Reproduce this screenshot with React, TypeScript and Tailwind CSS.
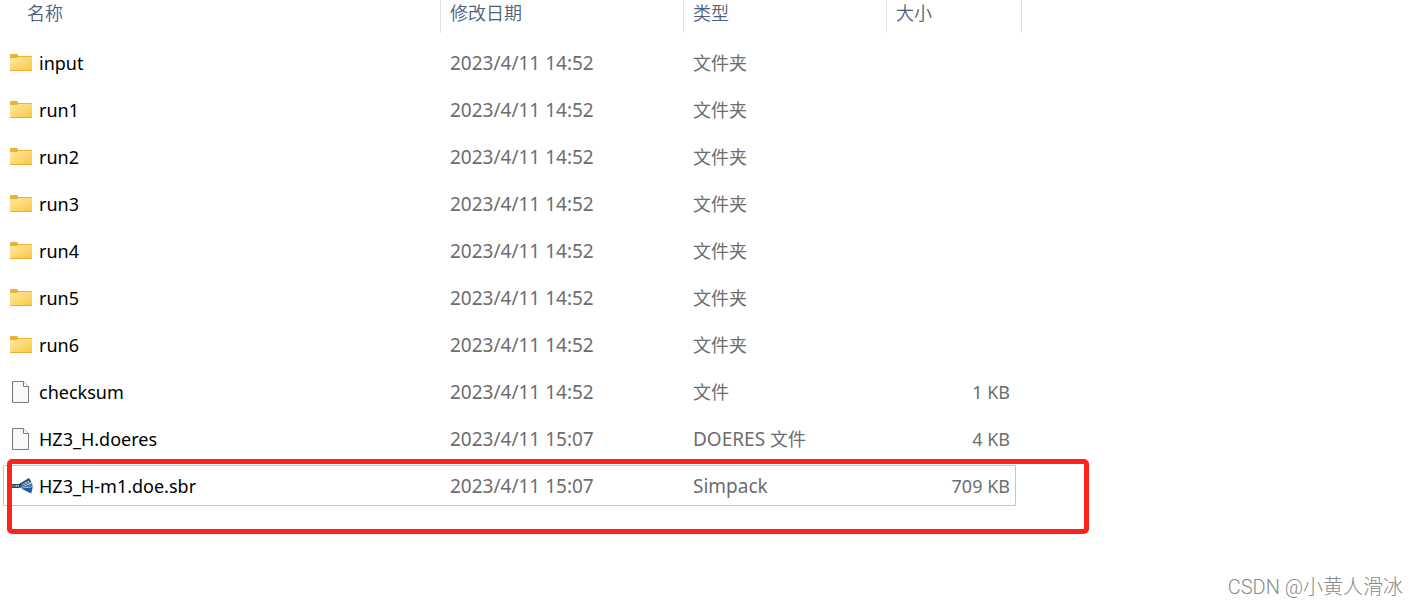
type Kind = "folder" | "file" | "simpack";

interface Entry {
  name: string;
  date: string;
  type: string;
  cjkType?: string;
  size?: string;
  kind: Kind;
}

const folders: Entry[] = ["input", "run1", "run2", "run3", "run4", "run5", "run6"].map((name) => ({
  name,
  date: "2023/4/11 14:52",
  type: "",
  cjkType: "文件夹",
  kind: "folder",
}));

const entries: Entry[] = [
  ...folders,
  { name: "checksum", date: "2023/4/11 14:52", type: "", cjkType: "文件", size: "1 KB", kind: "file" },
  { name: "HZ3_H.doeres", date: "2023/4/11 15:07", type: "DOERES ", cjkType: "文件", size: "4 KB", kind: "file" },
  { name: "HZ3_H-m1.doe.sbr", date: "2023/4/11 15:07", type: "Simpack", size: "709 KB", kind: "simpack" },
];

function FolderIcon() {
  return (
    <svg className="h-[18px] w-6 shrink-0" viewBox="0 0 24 18" aria-hidden="true">
      <defs>
        <linearGradient id="folder" x1="0" y1="0" x2="1" y2="1">
          <stop offset="0" stopColor="#ffe9a6" />
          <stop offset="1" stopColor="#fbc843" />
        </linearGradient>
      </defs>
      <path d="M1 1Q1 0 2 0H8L9 1V2H22Q23 2 23 3V16Q23 17 22 17H2Q1 17 1 16Z" fill="#efb02e" />
      <path d="M1 4H8L9 3H23V16H1Z" fill="url(#folder)" />
      <path d="M1 16H23Q23 17 22 17H2Q1 17 1 16Z" fill="#e9ab35" />
    </svg>
  );
}

function FileIcon() {
  return (
    <svg className="h-[22px] w-6 shrink-0" viewBox="0 0 24 22" aria-hidden="true">
      <path d="M3.5.5H14.5L19.5 5.5V21.5H3.5Z" fill="#f9f9f9" stroke="#7a7a78" />
      <path d="M14.5 .5V5.5H19.5" fill="#fff" stroke="#7a7a78" />
    </svg>
  );
}

function SimpackIcon() {
  return (
    <svg className="h-4 w-6 shrink-0" viewBox="0 0 24 16" aria-hidden="true">
      <path d="M1 6H10L20 0L22.5 4L12 9.5L10 10H1Z" fill="#234a72" />
      <path d="M12.5 6.6L19.5 2.4L20.8 4.2L13 8Z" fill="#b9c8d6" />
      <path d="M13.5 6L14.6 7.6M15.6 4.8L16.8 6.6M18 3.4L19.2 5.4" stroke="#234a72" strokeWidth="1" />
      <path d="M12 9.4L23 5L23.8 8.6L13 10Z" fill="#3f79b0" />
      <path d="M12 10.4L23.8 9L22.2 15.6Z" fill="#1f5c9c" />
      <path d="M2.5 8H4.5M6 7V9M7.5 9V7L8.5 8L9.5 7V9" fill="none" stroke="#b9c8d6" strokeWidth=".8" />
    </svg>
  );
}

const icons = { folder: FolderIcon, file: FileIcon, simpack: SimpackIcon };

export default function App() {
  return (
    <main className="relative min-h-screen bg-white pl-[3px] font-['Noto_Sans','Noto_Sans_CJK_SC',sans-serif]">
      <table className="table-fixed border-separate border-spacing-0 text-left text-[19px] leading-6 text-[#6d6d6d]">
        <colgroup>
          <col className="w-[438px]" />
          <col className="w-[243px]" />
          <col className="w-[203px]" />
          <col className="w-[135px]" />
        </colgroup>
        <thead>
          <tr className="h-[39px] align-top text-[18px] text-[#4c607a]">
            {["名称", "修改日期", "类型", "大小"].map((label, i) => (
              <th key={label} scope="col" className="p-0 font-[350]">
                <div className={`h-[33px] border-r border-[#e2e2e2] pt-px ${i === 0 ? "pl-6" : "pl-[9px]"}`}>{label}</div>
              </th>
            ))}
          </tr>
        </thead>
        <tbody>
          {entries.map((e) => {
            const Icon = icons[e.kind];
            return (
              <tr key={e.name} className="relative h-[47px]">
                <td className="p-0 pl-[6px] text-[18px] text-black">
                  {e.kind === "simpack" && (
                    <span className="absolute inset-y-[3px] left-0 right-[6px] rounded-[1px] border border-[#99d1ff]" />
                  )}
                  <div className="flex items-center gap-[6px]">
                    <Icon />
                    <span>{e.name}</span>
                  </div>
                  {e.kind === "simpack" && (
                    <span className="absolute -top-[3px] left-1 h-[75px] w-[1082px] rounded-[5px] border-5 border-[#fb231c]" />
                  )}
                </td>
                <td className="p-0 pl-[9px]">{e.date}</td>
                <td className="p-0 pl-[9px]">
                  {e.type}
                  <span className="text-[18px]">{e.cjkType}</span>
                </td>
                <td className="p-0 pr-3 text-right text-[18px]">{e.size}</td>
              </tr>
            );
          })}
        </tbody>
      </table>
      <p className="absolute bottom-2 right-4 font-['Roboto','Noto_Sans_CJK_SC',sans-serif] text-[20px] leading-6 font-light text-[#8a8a8a]">
        CSDN @小黄人滑冰
      </p>
    </main>
  );
}
